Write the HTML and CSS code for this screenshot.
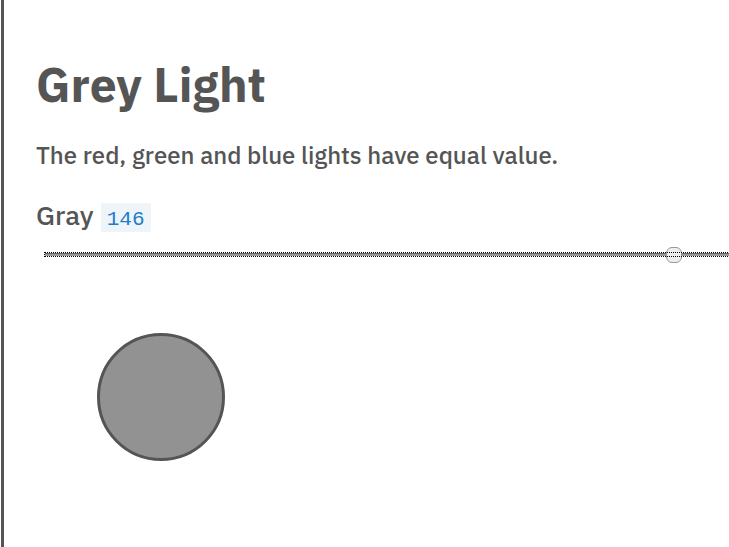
FILE: index.html
```html
<!DOCTYPE html>
<html lang="en">
<head>
<meta charset="utf-8">
<meta name="viewport" content="width=device-width, initial-scale=1">
<title>Grey Light</title>
<link rel="stylesheet" href="styles.css">
</head>
<body>
<main class="panel">
  <h1 class="title">Grey Light</h1>
  <p class="intro">The red, green and blue lights have equal value.</p>
  <div class="field">
    <label for="gray">Gray</label>
    <code class="value">146</code>
  </div>
  <input class="slider" id="gray" type="range" min="0" max="255" value="146">
  <div class="swatch"></div>
</main>
</body>
</html>
```
FILE: styles.css
```css
* {
  box-sizing: border-box;
}

body {
  margin: 0;
  background: #fff;
  color: #555;
}

.panel {
  min-height: 100vh;
  margin-left: 1px;
  padding: 54px 0 0 32px;
  border-left: 3px solid #555;
  overflow: hidden;
}

.title {
  margin: 0;
  font: 700 48px/60px "IBM Plex Sans", Roboto, sans-serif;
}

.intro {
  margin: 25px 0 0;
  font: 500 24px/32px "IBM Plex Sans", Roboto, sans-serif;
}

.field {
  display: flex;
  align-items: baseline;
  gap: 7px;
  margin-top: 29px;
  font: 500 27px/30px "IBM Plex Sans", "Liberation Sans", sans-serif;
}

.value {
  padding: 4px 6px 0;
  border-radius: 2px;
  background: #eff4f9;
  color: #1c7fc9;
  font: 21px/25px "Liberation Mono", monospace;
}

.slider {
  display: block;
  appearance: none;
  width: calc(159% - 2px);
  height: 3px;
  margin: 21px 0 0 9px;
  background: linear-gradient(#666 1px, #999 1px);
  outline: 1px dotted #000;
}

.slider::-webkit-slider-thumb {
  appearance: none;
  width: 16px;
  height: 16px;
  border: 1px solid #999;
  border-radius: 6px;
  background: #eee;
}

.swatch {
  width: 128px;
  height: 128px;
  margin: 77px 0 0 61px;
  border: 3px solid #555;
  border-radius: 50%;
  background: #929292;
}
```
